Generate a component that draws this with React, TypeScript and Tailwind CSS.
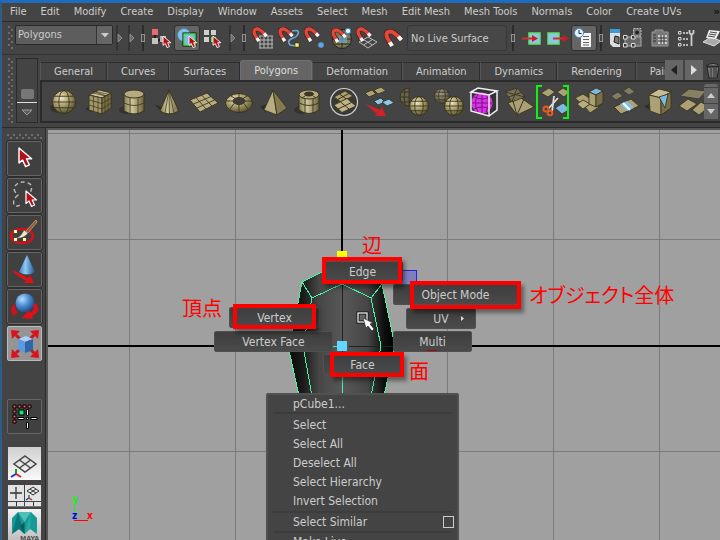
import React from "react";
import type { ReactNode } from "react";

const MENUS = [
  "File", "Edit", "Modify", "Create", "Display", "Window", "Assets",
  "Select", "Mesh", "Edit Mesh", "Mesh Tools", "Normals", "Color", "Create UVs",
];

const TABS = [
  "General", "Curves", "Surfaces", "Polygons", "Deformation",
  "Animation", "Dynamics", "Rendering", "PaintEffects",
];

/* ---------- shared drawing pieces ---------- */

function Defs() {
  return (
    <svg width="0" height="0" className="absolute" aria-hidden="true">
      <defs>
        <radialGradient id="goldBall" cx="38%" cy="32%" r="70%">
          <stop offset="0" stopColor="#f0e8c4" />
          <stop offset=".5" stopColor="#a89d6e" />
          <stop offset="1" stopColor="#5a5332" />
        </radialGradient>
        <linearGradient id="goldSide" x1="0" x2="1" y1="0" y2="0">
          <stop offset="0" stopColor="#8a8056" />
          <stop offset=".4" stopColor="#cfc59b" />
          <stop offset="1" stopColor="#6b623e" />
        </linearGradient>
        <radialGradient id="blueBall" cx="35%" cy="30%" r="75%">
          <stop offset="0" stopColor="#b5dcff" />
          <stop offset=".5" stopColor="#4a8bd0" />
          <stop offset="1" stopColor="#1c4478" />
        </radialGradient>
        <linearGradient id="blueCone" x1="0" x2="1" y1="0" y2="0">
          <stop offset="0" stopColor="#3d7fc0" />
          <stop offset=".4" stopColor="#8cc8f5" />
          <stop offset="1" stopColor="#215288" />
        </linearGradient>
        <linearGradient id="bodyAcross" x1="0" x2="1" y1="0" y2="0">
          <stop offset="0" stopColor="#080808" />
          <stop offset=".14" stopColor="#1c1c1c" />
          <stop offset=".28" stopColor="#464646" />
          <stop offset=".5" stopColor="#585858" />
          <stop offset=".74" stopColor="#464646" />
          <stop offset=".9" stopColor="#0e0e0e" />
          <stop offset="1" stopColor="#000" />
        </linearGradient>
      </defs>
    </svg>
  );
}

function Svg({ s = 30, h, children }: { s?: number; h?: number; children: ReactNode }) {
  const hh = h ?? s;
  return (
    <svg width={s} height={hh} viewBox={`0 0 ${s} ${hh}`} aria-hidden="true" className="block shrink-0">
      {children}
    </svg>
  );
}

function RedArrow({ x, y, k = 1 }: { x: number; y: number; k?: number }) {
  return (
    <path
      transform={`translate(${x} ${y}) scale(${k})`}
      d="M0 0V12.5L3 10L5.5 15.5L8.6 14L6.2 9H10.5Z"
      fill="#b80f16" stroke="#fff" strokeWidth="1.2" strokeLinejoin="round"
    />
  );
}

const EDGE = "#3a3419";

function Ball({ x, y, r }: { x: number; y: number; r: number }) {
  return (
    <g stroke={EDGE} fill="none">
      <circle cx={x} cy={y} r={r} fill="url(#goldBall)" />
      <ellipse cx={x} cy={y} rx={r * 0.45} ry={r} strokeWidth=".9" />
      <path d={`M${x - r} ${y}H${x + r}M${x - r * 0.85} ${y - r * 0.5}H${x + r * 0.85}M${x - r * 0.85} ${y + r * 0.5}H${x + r * 0.85}`} strokeWidth=".9" />
    </g>
  );
}

function Quad({ d, fill = "#aca175" }: { d: string; fill?: string }) {
  return <path d={d} fill={fill} stroke={EDGE} strokeWidth=".9" strokeLinejoin="round" />;
}

const SHELF: { name: string; art: ReactNode }[] = [
  { name: "Sphere", art: <><ellipse cx="10" cy="21" rx="9" ry="5" fill="#2c2c2c" opacity=".7" /><Ball x={15} y={15} r={11.5} /></> },
  { name: "Cube", art: <>
    <path d="M1 22L8 18V25Z" fill="#2c2c2c" />
    <Quad d="M5 8L15 3L27 6L18 11Z" fill="#cfc59b" />
    <Quad d="M5 8L18 11V27L5 23Z" fill="#a1966a" />
    <Quad d="M18 11L27 6V21L18 27Z" fill="#7a7049" />
    <path d="M5 13L18 16.5L27 11M5 18L18 22L27 16M9.500 9V24.500M14 10V26M21 9.300V25M24 7.600V23M9 6L22 9M12 4.500L24.500 7.500M9 4L22 9" stroke={EDGE} strokeWidth=".7" fill="none" />
  </> },
  { name: "Cylinder", art: <>
    <ellipse cx="7" cy="23" rx="7" ry="4" fill="#2c2c2c" opacity=".7" />
    <path d="M5 7V24Q15 30 25 24V7Z" fill="url(#goldSide)" stroke={EDGE} />
    <ellipse cx="15" cy="7" rx="10" ry="4" fill="#b5aa80" stroke={EDGE} />
    <path d="M5 16Q15 21 25 16M11 11V27M19 11V27" stroke={EDGE} fill="none" strokeWidth=".8" />
  </> },
  { name: "Cone", art: <>
    <path d="M0 17L12 22L9 26Z" fill="#2c2c2c" />
    <path d="M15 3L6 24Q15 30 25 24Z" fill="url(#goldSide)" stroke={EDGE} />
    <path d="M15 3L11 26M15 3L15.500 27M15 3L20 26" stroke={EDGE} strokeWidth=".7" />
  </> },
  { name: "Plane", art: <>
    <Quad d="M1 13L18 6L29 16L11 25Z" fill="#b8ad82" />
    <path d="M4.500 17L22 9.500M8 21L25.500 13M7 10.500L17 22M12.500 8L23 19" stroke={EDGE} strokeWidth=".9" />
  </> },
  { name: "Torus", art: <>
    <ellipse cx="15" cy="16" rx="13.500" ry="9.500" fill="url(#goldBall)" stroke={EDGE} />
    <ellipse cx="15" cy="14" rx="6" ry="3.500" fill="#3d3d3d" stroke={EDGE} />
    <path d="M15 17.500V25.500M20 16.500L24 22M10 16.500L6 22M21 14H28M9 14H2M19 11.500L23 9M11 11.500L7 9M15 10.500V6.500" stroke={EDGE} strokeWidth=".9" />
  </> },
  { name: "Pyramid", art: <>
    <path d="M1 20L8 17L7 25Z" fill="#2c2c2c" />
    <Quad d="M14 3L5 23L18 28Z" fill="#b8ad82" />
    <Quad d="M14 3L18 28L28 21Z" fill="#857b52" />
  </> },
  { name: "Pipe", art: <>
    <ellipse cx="7" cy="23" rx="7" ry="4" fill="#2c2c2c" opacity=".7" />
    <path d="M5 8V23Q15 30 25 23V8Z" fill="url(#goldSide)" stroke={EDGE} />
    <ellipse cx="15" cy="7.500" rx="10" ry="4.500" fill="#b5aa80" stroke={EDGE} />
    <ellipse cx="15" cy="7" rx="4.500" ry="2" fill="#3a3a2a" stroke={EDGE} />
    <path d="M5 16Q15 21 25 16M11 12V26M19 12V26M11 9L8 11M19 9L22 11" stroke={EDGE} fill="none" strokeWidth=".9" />
  </> },
  { name: "Subdivide", art: <>
    <circle cx="15" cy="15" r="13.500" fill="#3a3a3a" stroke="#cfcfcf" strokeWidth="1.200" />
    <Quad d="M5 10L16 4L24 9L12 15Z" />
    <path d="M10.500 7L18 12.500M8.500 12.500L20 6.500" stroke={EDGE} />
    <Quad d="M5 18L18 11.500L27 19L13 25.500Z" fill="#bfb489" />
    <path d="M9 22L22.500 15.500M11.500 15L20 22" stroke={EDGE} />
  </> },
  { name: "Extract", art: <>
    <Quad d="M1 6L8 3L12 7L5 10Z" /><Quad d="M10 3L17 0L22 4L14 7Z" />
    <Quad d="M10 14L17 11L21 15L14 18Z" fill="#8cc6ec" /><Quad d="M18 15L25 12L30 16L23 19Z" fill="#8cc6ec" />
    <path d="M2 17L16 23L18 20L22 29L11 29L13 27L7 22Z" fill="#d1202a" />
  </> },
  { name: "Combine", art: <><path d="M10 1A9 9 0 0 0 10 19Z" fill="#68634e" stroke={EDGE} /><path d="M1 10H10M3 5H10M3 15H10M6 2Q4 10 6 18" stroke={EDGE} fill="none" /><Ball x={20} y={19} r={9.5} /></> },
  { name: "Separate", art: <><g opacity=".55"><Ball x={8} y={9} r={7.5} /></g><Ball x={20} y={19} r={9.5} /></> },
  { name: "Smooth proxy", art: <>
    <path d="M2 5L9 1L28 4L28 23L20 29L2 24Z" fill="#333" />
    <circle cx="13" cy="16" r="10.500" fill="#d935e4" />
    <path d="M13 6V26M3 16H23M5 10Q13 14 21 10M5 22Q13 18 21 22M9 7Q4 16 9 25M17 7Q22 16 17 25" stroke="#7a1187" fill="none" />
    <path d="M2 5L9 1L28 4L20 8ZM2 5V24L20 29V8M20 29L28 23V4" fill="none" stroke="#f2eef5" strokeWidth="1.500" />
  </> },
  { name: "Append", art: <>
    <Quad d="M4 16L17 11L30 20L13 28Z" /><path d="M13 28L9 14M13 28L20 12" stroke={EDGE} />
    <g opacity=".75"><Quad d="M1 5L13 1L21 10L8 15Z" fill="#8b825c" /><path d="M4.500 10L17 5.500M1 5L21 10M13 1L8 15" stroke={EDGE} /></g>
  </> },
  { name: "Cut faces", art: <>
    <Quad d="M2 6L10 1L16 5L9 10Z" /><Quad d="M18 5L24 1L31 5L25 10Z" /><Quad d="M16 21L24 16L31 22L23 27Z" fill="#7cb9e2" />
    <path d="M9 22L19 11M13 25L15 9" stroke="#ddd" strokeWidth="1.800" />
    <circle cx="7" cy="22" r="2.500" fill="none" stroke="#e65a1c" strokeWidth="2" /><circle cx="11" cy="26" r="2.300" fill="none" stroke="#e65a1c" strokeWidth="2" />
  </> },
  { name: "Extrude", art: <>
    <Quad d="M1 11L9 7L20 14L11 20Z" /><Quad d="M11 20L19 15L25 20L16 26Z" /><Quad d="M3 17L9 13L16 17L9 22Z" fill="#b8ad82" />
    <Quad d="M15 5L22 1L29 4L22 8Z" fill="#7cb9e2" /><Quad d="M15 5L22 8V20L15 17Z" /><Quad d="M22 8L29 4V16L22 20Z" fill="#786e48" />
  </> },
  { name: "Bridge", art: <>
    <g opacity=".6"><Quad d="M2 9L9 5L14 9L7 13Z" /><Quad d="M14 4L20 0L26 5L20 8Z" /></g>
    <Quad d="M5 20L22 12L30 19L12 27Z" /><path d="M11 17L18 14L25 21L18 24Z" fill="#82bee8" /><path d="M14 16L21 23" stroke="#fff" strokeWidth="2" />
  </> },
  { name: "Bevel", art: <>
    <path d="M0 19L8 16V25Z" fill="#2c2c2c" />
    <Quad d="M5 8L15 2L27 5L17 11Z" fill="#c6bc92" /><Quad d="M5 8L17 11V28L6 24Z" /><Quad d="M17 11L27 5V21L17 28Z" fill="#786e48" /><Quad d="M15 10L24 7L21 21Z" fill="#7cb9e2" />
  </> },
  { name: "Merge", art: <>
    <g opacity=".65"><Quad d="M1 9L10 2L27 4L20 12Z" /></g><Quad d="M0 19L9 12L18 17L8 24Z" /><Quad d="M13 23L22 15L30 20L20 28Z" />
  </> },
];

function Magnet() {
  return (
    <g fill="none" strokeLinejoin="round">
      <path d="M6 13L2.800 7.500Q.5 2 5.500 2Q8 2 13.500 8" stroke="#5c1511" strokeWidth="4.600" />
      <path d="M6 13L2.800 7.500Q.5 2 5.500 2Q8 2 13.500 8" stroke="#dc4a3d" strokeWidth="3.300" />
      <path d="M4.800 11L6.800 14.200M12 6.300L14.500 9.200" stroke="#f5f5f5" strokeWidth="3.300" />
    </g>
  );
}

const MAGNETS: { name: string; art: ReactNode }[] = [
  { name: "Snap to grids", art: <><path d="M7 9H21M7 13H21M7 17H21M7 21H21M8 9V21M12 9V21M16 9V21M20 9V21" stroke="#b8b8b8" /><Magnet /></> },
  { name: "Snap to curves", art: <><path d="M14 4Q22 2 20 7Q19 10 13 12Q9 14 12 18L18 19" fill="none" stroke="#69a9d8" strokeWidth="1.600" /><Magnet /><rect x="17" y="16" width="4" height="4" fill="#fff45a" stroke="#222" strokeWidth=".5" /></> },
  { name: "Snap to points", art: <><Magnet /><circle cx="17" cy="18" r="2.800" fill="#5da4e8" /></> },
  { name: "Snap to projected center", art: <><circle cx="12" cy="12" r="9.500" fill="#7d7654" stroke="#24231b" /><path d="M3 12H21M12 3V21M5 17H19" stroke="#2c2a1e" /><rect x="9" y="9" width="8" height="7" fill="#68aac8" opacity=".75" /><g transform="translate(1 1)"><Magnet /></g><circle cx="18" cy="4" r="2.700" fill="#eef7ff" stroke="#2c86cf" /></> },
  { name: "Snap to view planes", art: <><path d="M3 15L12 10L21 15L12 21ZM7.500 12.500L16.500 18M7.500 18L16.500 12.500" fill="none" stroke="#bbb" /><Magnet /></> },
  { name: "Make live", art: <g transform="translate(2 2) scale(1.200)"><Magnet /></g> },
];

/* ---------- small chrome parts ---------- */

function Grip({ className }: { className: string }) {
  return (
    <div
      aria-hidden="true"
      className={`shrink-0 bg-[radial-gradient(circle_at_1px_1px,#6c6c6c_1px,transparent_1px),radial-gradient(circle_at_4px_4px,#6c6c6c_1px,transparent_1px)] bg-[size:6px_6px] ${className}`}
    />
  );
}

function Handle() {
  return (
    <span className="flex w-3 shrink-0 justify-center" aria-hidden="true">
      <Svg s={8} h={26}><path d="M2 0V26" stroke="#242424" /><path d="M3 9L7 13L3 17Z" fill="#6b6b6b" stroke="#999" strokeWidth=".8" /></Svg>
    </span>
  );
}

function Divider({ className = "w-3" }: { className?: string }) {
  return (
    <span className={`flex shrink-0 justify-center ${className}`} aria-hidden="true">
      <Svg s={6} h={26}><path d="M3 0V26" stroke="#242424" strokeWidth="1.500" /><rect x="1.500" y="9.500" width="3" height="7" fill="#444" stroke="#919191" /></Svg>
    </span>
  );
}

function Tool({ name, on = false, children }: { name: string; on?: boolean; children: ReactNode }) {
  return (
    <button
      aria-label={name}
      className={`flex h-[26px] w-[26px] shrink-0 items-center justify-center rounded-[3px] border ${on ? "border-[#303030] bg-[#656565]" : "border-transparent"}`}
    >
      {children}
    </button>
  );
}

function ToolBar() {
  return (
    <div className="flex h-[33px] shrink-0 items-center overflow-hidden border-b border-[#333] pl-[6px]">
      <Grip className="mr-px h-6 w-[6px]" />
      <label className="relative mb-[6px] block w-[98px] shrink-0">
        <span className="sr-only">Menu set</span>
        <select className="block h-5 w-full appearance-none rounded-[2px] border border-[#292929] bg-[#5d5d5d] py-0 pl-[2px] text-[#ccc]">
          <option>Polygons</option>
        </select>
        <span className="pointer-events-none absolute inset-y-px right-px flex w-4 items-center justify-center border-l border-[#333] bg-[#666]">
          <Svg s={8} h={5}><path d="M0 0H8L4 4.500Z" fill="#ccc" /></Svg>
        </span>
      </label>
      <Handle /><Handle /><Divider className="w-[11px]" />
      <Tool name="Select by hierarchy"><Svg s={22}>
        <path d="M5 7V16M8 13H14" stroke="#111" strokeWidth="1.500" />
        <rect x="2" y="2" width="6" height="6" fill="#ea6a6e" /><rect x="2" y="11" width="6" height="6" fill="#c4c4c4" /><rect x="10" y="9" width="6" height="6" fill="#b4b4b4" />
        <RedArrow x={13} y={9} k={0.75} /></Svg></Tool>
      <Tool name="Select by object" on><Svg s={22}>
        <circle cx="8" cy="8" r="6.500" fill="#82c0ee" stroke="#3f78a8" strokeWidth=".6" /><rect x="8" y="7" width="11" height="11" fill="#7dbbe6" stroke="#111" strokeWidth="3" /><rect x="8" y="7" width="11" height="11" fill="#7dbbe6" stroke="#45e045" strokeWidth="1.500" />
        <RedArrow x={13} y={9} k={0.75} /></Svg></Tool>
      <Tool name="Select by component"><Svg s={22}>
        <path d="M2 3H7V8H2ZM9 3H14V8H9ZM2 10H7V15H2Z" fill="#cfcfcf" /><path d="M9 10H14V15H9Z" fill="#5fe05f" />
        <RedArrow x={11} y={9} k={0.75} /></Svg></Tool>
      <Handle /><Divider />
      {MAGNETS.map((m) => <Tool key={m.name} name={m.name}><Svg s={22}>{m.art}</Svg></Tool>)}
      <input
        aria-label="Live surface" readOnly value="No Live Surface"
        className="ml-px h-[26px] w-[100px] shrink-0 rounded-[3px] border border-[#373737] bg-[#474747] pl-[3px] text-[#ccc]"
      />
      <Divider />
      <Tool name="Input connections"><Svg s={22}><rect x="8" y="6" width="11" height="11" fill="#8cc6ea" stroke="#62e062" strokeWidth="1.500" /><path d="M1 11.500H12" stroke="#d02c2c" strokeWidth="2" /><path d="M11 8L17 11.500L11 15Z" fill="#c91c22" /></Svg></Tool>
      <Tool name="Output connections"><Svg s={22}><rect x="1" y="6" width="11" height="11" fill="#8cc6ea" stroke="#62e062" strokeWidth="1.500" /><path d="M6 11.500H17" stroke="#d02c2c" strokeWidth="2" /><path d="M16 8L22 11.500L16 15Z" fill="#c91c22" /></Svg></Tool>
      <Tool name="Construction history" on><Svg s={22}><path d="M8 6H18V20H8Z" fill="#f5f5f5" /><path d="M10 9.500H16M10 12.500H16M10 15.500H16M10 18H16" stroke="#666" /><circle cx="6" cy="6" r="4.500" fill="#e6f4ff" stroke="#4e8cc0" /><path d="M6 3V6.500H8.500" stroke="#222" fill="none" /></Svg></Tool>
      <Divider className="w-2" />
      <button aria-label="Render settings" className="flex w-[42px] shrink-0 items-center justify-center">
        <Svg s={34} h={20}>
          <path d="M1 1H11V19H4L1 16Z" fill="#ddd" /><path d="M1 1H11V5H1Z" fill="#3b9ad8" /><path d="M10 9L6 8L5 14L10 16Z" fill="#777" stroke="#222" />
          <rect x="16" y="9" width="16" height="9" fill="#686868" stroke="#aaa" /><path d="M14.500 7.500H18V11H14.500ZM22.500 7.500H26V11H22.500ZM14.500 15.500H18V19H14.500ZM22.500 15.500H26V19H22.500Z" fill="#333" stroke="#ddd" />
          <path d="M24.500 .5H32V8H24.500Z" fill="#777" stroke="#bbb" strokeDasharray="2 1" /><circle cx="28" cy="4.500" r="2" fill="#222" />
        </Svg>
      </button>
      <Tool name="Spreadsheet"><Svg s={20}><path d="M2 4H5V2H13V4H18V18H2Z" fill="#777" stroke="#999" /><path d="M8 7H17V16H8Z" fill="#ccc" /><path d="M8 10H17M8 13H17M11 7V16M14 7V16M3 7H6M3 10H6M3 13H6" stroke="#333" /></Svg></Tool>
      <Tool name="Attribute list"><Svg s={20}><path d="M2.500 3.500H5V6H2.500ZM2.500 9.500H5V12H2.500ZM2.500 15.500H5V18H2.500Z" stroke="#ddd" fill="none" /><path d="M7 5H12M7 11H12M7 17H12" stroke="#ddd" strokeWidth="1.500" strokeDasharray="2 1" /><path d="M13.500 2V5L15.500 7L17.500 5V2M15.500 7V18" stroke="#ccc" strokeWidth="1.800" fill="none" /></Svg></Tool>
      <Tool name="Channel box"><Svg s={20}><path d="M1 14L9 9L19 13L12 18Z" fill="#aaa" stroke="#ddd" /><path d="M7 2L18 3L14 11L4 10Z" fill="#eee" /><path d="M8 4L15 5M7 6L14 7M6 8L13 9" stroke="#444" /></Svg></Tool>
    </div>
  );
}

function Shelf() {
  return (
    <div className="flex h-[73px] shrink-0 overflow-hidden border-b border-[#2b2b2b] pt-[3px] pb-1 pl-[6px]">
      <Grip className="mr-[2px] h-full w-[6px]" />
      <div className="mr-[2px] flex w-[22px] shrink-0 flex-col items-center justify-end border border-[#2b2b2b]">
        <button aria-label="Shelf tab options" className="mb-[3px] h-[10px] w-[13px] rounded-[2px] bg-[#777]" />
        <span className="h-px w-full bg-[#ddd]" />
        <button aria-label="Shelf menu" className="flex h-[19px] items-center"><Svg s={12} h={7}><path d="M1 1H11L6 6Z" fill="#5d5d5d" stroke="#999" /></Svg></button>
      </div>
      <div className="flex min-w-0 flex-1 flex-col">
        <div className="flex h-[22px] shrink-0 items-end">
          <div role="tablist" aria-label="Shelves" className="flex min-w-0 flex-1 items-end overflow-hidden">
            {TABS.map((t) => (
              <button
                key={t} role="tab" aria-selected={t === "Polygons"}
                className={`shrink-0 border border-b-0 px-[13px] ${t === "Polygons" ? "h-5 rounded-t-[3px] border-[#707070] bg-[#656565] text-[#ddd]" : "h-[18px] border-[#2d2d2d] border-l-[#565656] bg-[#454545] text-[#ccc]"}`}
              >
                {t}
              </button>
            ))}
          </div>
          <div className="flex shrink-0 items-center gap-[2px] pr-[1px]">
            <button aria-label="Scroll tabs left" className="flex h-5 w-[18px] items-center justify-center bg-[#666]"><Svg s={8} h={12}><path d="M7 1V11L1 6Z" fill="#222" /></Svg></button>
            <button aria-label="Scroll tabs right" className="flex h-5 w-[18px] items-center justify-center bg-[#666]"><Svg s={8} h={12}><path d="M1 1V11L7 6Z" fill="#ddd" /></Svg></button>
            <button aria-label="Delete shelf item" className="flex w-[14px] justify-center"><Svg s={14} h={18}><path d="M2 6H14L12 17H4Z" fill="#777" stroke="#222" /><path d="M6 7V16M9 7V16M11 7V16" stroke="#333" /><path d="M1 5Q8 0 15 5Z" fill="#888" stroke="#222" /></Svg></button>
          </div>
        </div>
        <div className="flex min-h-0 flex-1 items-center border-2 border-r-0 border-[#2b2b2b] bg-[#444] pl-1">
          <div className="flex min-w-0 flex-1 overflow-hidden">
            {SHELF.map((s) => (
              <button
                key={s.name} aria-label={s.name}
                className="relative flex h-9 w-[35px] shrink-0 items-center justify-center"
              >
                {s.name === "Cut faces" && (
                  <svg width="35" height="36" className="absolute inset-0" aria-hidden="true"><path d="M6 2H1V34H6M27 2H32V34H27" fill="none" stroke="#12f212" strokeWidth="2" /></svg>
                )}
                <Svg s={30}>{s.art}</Svg>
              </button>
            ))}
          </div>
          <div className="flex w-4 shrink-0 flex-col gap-px">
            <span className="h-[3px] w-[14px] rounded-t bg-[#686868]" />
            <button aria-label="Scroll shelf up" className="flex h-[15px] w-[14px] items-center justify-center bg-[#666]"><Svg s={8} h={5}><path d="M0 5H8L4 0Z" fill="#ccc" /></Svg></button>
            <button aria-label="Scroll shelf down" className="flex h-[15px] w-[14px] items-center justify-center bg-[#666]"><Svg s={8} h={5}><path d="M0 0H8L4 5Z" fill="#ccc" /></Svg></button>
          </div>
        </div>
      </div>
    </div>
  );
}

/* ---------- tool box ---------- */

const TOOLS: { name: string; art: ReactNode }[] = [
  { name: "Select tool", art: <RedArrow x={11} y={6} k={1.2} /> },
  { name: "Lasso tool", art: <><path d="M7 7Q12 1 20 4Q26 6 22 14M6 10Q7 14 10 16Q4 21 6 26Q10 29 14 24" fill="none" stroke="#b8b8b8" strokeWidth="1.500" strokeDasharray="4 3" /><RedArrow x={18} y={12} k={1} /></> },
  { name: "Paint selection tool", art: <>
    <ellipse cx="14" cy="20" rx="11" ry="7" fill="none" stroke="#d60f1a" strokeWidth="2.500" />
    <path d="M18 15L28 4L29 6L20 17Z" fill="#8c5a3a" stroke="#c29068" strokeWidth="1" /><path d="M8 22Q13 21 16 14L20 17Q16 23 8 22Z" fill="#efe6c8" stroke="#444" strokeWidth=".5" />
    <path d="M6 14H9V17H6ZM6 22H9V25H6ZM15 22H18V25H15Z" fill="#ffffa8" />
  </> },
  { name: "Move tool", art: <><path d="M19 2L11 19Q19 24 27 19Z" fill="url(#blueCone)" /><path d="M5 17L20 25L22 22L26 30L15 30L18 28L6 20Z" fill="#e01018" /></> },
  { name: "Rotate tool", art: <><path d="M6 14Q0 20 6 26L10 22Q6 19 8 16Z" fill="#c8141c" /><circle cx="17" cy="13" r="9.500" fill="url(#blueBall)" /><path d="M28 13Q34 22 24 26L25 29L14 28L21 20L22 23Q27 20 25 15Z" fill="#e01018" /></> },
  { name: "Scale tool", art: <>
    <path d="M8 8L26 26M26 8L8 26" stroke="#c01820" strokeWidth="3" />
    <path d="M3 3L12 4L4 12ZM31 3L22 4L30 12ZM3 31L12 30L4 22ZM31 31L22 30L30 22Z" fill="#e01018" />
    <path d="M10 12L18 9L25 12L17 15Z" fill="#a8d2f7" /><path d="M10 12L17 15V26L10 23Z" fill="#5a9ade" /><path d="M17 15L25 12V23L17 26Z" fill="#2f66a8" />
  </> },
];

const PERSP = "M16 8L27 16L16 24L5 16ZM10.500 12L21.500 20M21.500 12L10.500 20";

function ToolBox() {
  return (
    <div className="flex w-[44px] shrink-0 flex-col overflow-hidden border-r border-[#2b2b2b] pl-[5px] pt-[6px]">
      <Grip className="mb-px h-[6px] w-[35px]" />
      <div className="flex flex-col gap-[2px]">
        {TOOLS.map((t) => (
          <button key={t.name} aria-label={t.name} className={`flex h-[35px] w-[35px] shrink-0 items-center justify-center rounded-[2px] border ${t.name === "Scale tool" ? "border-[#bbb] bg-[#959595]" : "border-[#656565] bg-[#404040] outline outline-[#2e2e2e]"}`}>
            <Svg s={33}>{t.art}</Svg>
          </button>
        ))}
      </div>
      <button aria-label="Last tool" className="mt-[38px] flex h-[35px] w-[35px] shrink-0 items-center justify-center rounded-[2px] border border-[#656565] bg-[#404040]">
        <Svg s={33}>
          <path d="M5 5H8V8H5ZM10 5H13V8H10ZM15 5H18V8H15ZM20 5H23V8H20ZM5 10H8V13H5ZM5 15H8V18H5ZM5 20H8V23H5Z" fill="#f05a55" stroke="#000" />
          <path d="M11 10H16V15H11Z" fill="#19e37c" stroke="#000" />
          <path d="M18.500 9.500H20.500V15.500H18.500ZM10 17.500H16V19.500H10ZM18.500 17.500H20.500V19.500H18.500ZM23 17.500H29V19.500H23ZM18.500 22.500H20.500V28.500H18.500Z" fill="#fff" stroke="#000" />
        </Svg>
      </button>
      <button aria-label="Single perspective view" className="mt-[13px] ml-px flex h-[33px] w-[33px] shrink-0 items-center justify-center bg-gradient-to-b from-[#d0d0d0] to-[#fafafa]">
        <Svg s={32}><path d={PERSP} fill="none" stroke="#444" strokeWidth="1.500" /><path d="M7 21V26" stroke="#169c30" strokeWidth="2" /><path d="M7 26L2 29" stroke="#1733d8" strokeWidth="2" /><path d="M7 26L12 29" stroke="#e02020" strokeWidth="2" /></Svg>
      </button>
      <div className="mt-[5px] ml-px grid h-[22px] w-[33px] shrink-0 grid-cols-2 grid-rows-[16px_4px] gap-px overflow-hidden border-b border-[#777] text-[#222]">
        <button aria-label="Four view" className="flex items-center justify-center bg-[#e3e3e3]"><Svg s={14}><path d="M7 1V13M1 7H13" stroke="#333" strokeWidth="1.300" /></Svg></button>
        <button aria-label="Perspective and outliner" className="flex items-center justify-center bg-[#e3e3e3]"><Svg s={16}><path d="M8 2L14 6L8 10L2 6ZM5 4L11 8M11 4L5 8" fill="none" stroke="#333" /><path d="M4 10V13" stroke="#169c30" strokeWidth="1.500" /><path d="M4 13L1 15" stroke="#1733d8" strokeWidth="1.500" /><path d="M4 13L7 15" stroke="#e02020" strokeWidth="1.500" /></Svg></button>
        <span className="flex justify-center bg-[#e3e3e3]"><span className="h-full w-px bg-[#333]" /></span>
        <span className="flex justify-center bg-[#e3e3e3]"><span className="h-full w-px bg-[#333]" /></span>
      </div>
      <div className="mt-[2px] ml-px h-[33px] w-[33px] shrink-0 bg-gradient-to-b from-[#f3f3f3] to-[#bcbcbc]">
        <svg width="33" height="33" aria-label="Maya">
          <path d="M4 25V9L10 3L16.500 8L23 3L29 9V25L22 20L16.500 25L11 20Z" fill="#159a98" />
          <path d="M10 3L16.500 25L11 20L4 25Z" fill="#0c7778" /><path d="M10 3H23L16.500 13Z" fill="#4fbfb8" /><path d="M23 3L22 20L16.500 25Z" fill="#2aa8a2" /><path d="M16.500 13V25L12 17Z" fill="#075c62" />
          <text x="12" y="32" fontSize="7" fontWeight="bold" fill="#555">MAYA</text>
        </svg>
      </div>
    </div>
  );
}

/* ---------- viewport ---------- */

function Scene() {
  const xs = [129, 235, 447, 553, 659, 765, 871, 977, 1083, 1189];
  const ys = [133, 239, 451, 557, 663, 769, 875];
  return (
    <svg className="absolute inset-0 h-full w-full" aria-hidden="true">
      <g transform="translate(-48 -130)">
        <g stroke="#7b7b7b" shapeRendering="crispEdges">
          {xs.map((x) => <path key={x} d={`M${x + 0.5} 130V2000`} />)}
          {ys.map((y) => <path key={y} d={`M48 ${y + 0.5}H3000`} />)}
        </g>
        <g stroke="#000" strokeWidth="2" shapeRendering="crispEdges"><path d="M342 130V400M48 346H3000" /></g>
        <path d="M302 282L322 272L342 262L364 272L382 284L395 346L384 396H299L289 350Z" fill="url(#bodyAcross)" />
        <g fill="none" shapeRendering="crispEdges">
          <path d="M342 284V376M349 346H395" stroke="#202020" />
          <path d="M302 282L322 272L342 262L364 272L382 284L395 346L384 396M302 282L289 350L299 396M302 282L312 298L342 284L371 298L382 284M312 298L303 346L312 396M371 298L381 346L371 396M342 376V396M333 346H338" stroke="#45f5a3" />
        </g>
        <rect x="337" y="251" width="10" height="9" fill="#ff0" />
        <rect x="337" y="341" width="10" height="10" fill="#62d7ff" />
        <rect x="401.500" y="270.500" width="15" height="15" fill="#4040ff" fillOpacity=".35" stroke="#2424d8" />
        <path d="M74.500 521V507" stroke="#0f0" /><path d="M74 520.500H88" stroke="#f00" />
        <g fontSize="10" fontWeight="bold"><text x="72" y="503" fill="#0f0">y</text><text x="72" y="519" fill="#00f">z</text><text x="87" y="519" fill="#f00">x</text></g>
      </g>
    </svg>
  );
}

const MARKS = [
  { text: "Edge", box: "left-[274px] top-[131px] w-[81px]" },
  { text: "Object Mode", box: "left-[345px] top-[154px] w-[125px]" },
  { text: "UV", box: "left-[358px] top-[178px] w-[70px]" },
  { text: "Multi", box: "left-[345px] top-[201px] w-[79px]" },
  { text: "Vertex", box: "left-[181px] top-[177px] w-[91px]" },
  { text: "Vertex Face", box: "left-[166px] top-[201px] w-[119px]" },
  { text: "Face", box: "left-[275px] top-[224px] w-[79px]" },
];

const FRAMES = [
  "left-[274px] top-[127px] h-[27px] w-[80px]",
  "left-[362px] top-[151px] h-[28px] w-[111px]",
  "left-[185px] top-[174px] h-[25px] w-[83px]",
  "left-[282px] top-[222px] h-[25px] w-[74px]",
];

const NOTES = [
  { text: "辺", box: "left-[314px] top-[105px]" },
  { text: "オブジェクト全体", box: "left-[481px] top-[155px]" },
  { text: "頂点", box: "left-[134px] top-[168px]" },
  { text: "面", box: "left-[361px] top-[231px]" },
];

const MENU_ITEMS = ["Select", "Select All", "Deselect All", "Select Hierarchy", "Invert Selection"];

function Rule() {
  return <div role="separator" className="mx-[5px] h-[2px] bg-[#3c3c3c]" />;
}

function Viewport() {
  return (
    <main className="relative min-w-0 flex-1 overflow-hidden bg-[#a0a0a0] text-[12px]">
      <Scene />
      {MARKS.map((m) => (
        <button key={m.text} className={`absolute flex h-[21px] items-center justify-center rounded-[2px] border border-[#505050] bg-gradient-to-b from-[#3e3e3e] to-[#4a4a4a] text-[#ccc] ${m.box}`}>
          {m.text}
          {m.text === "UV" && <span className="absolute right-[10px] top-[6px]"><Svg s={5} h={7}><path d="M1 1V6L4 3.500Z" fill="#ddd" /></Svg></span>}
        </button>
      ))}
      {FRAMES.map((f) => (
        <div key={f} className={`pointer-events-none absolute border-4 border-[#f00] shadow-[3px_4px_4px_rgba(0,0,0,0.4)] ${f}`} />
      ))}
      {NOTES.map((n) => (
        <p key={n.text} className={`absolute whitespace-nowrap font-['Noto_Sans_CJK_JP',sans-serif] text-[20px] leading-[20px] text-[#f00] [font-feature-settings:'palt'] ${n.box}`}>{n.text}</p>
      ))}
      <span className="absolute left-[379px] top-[220px] h-px w-[10px] bg-[#a00]" />
      <svg width="20" height="26" className="absolute left-[308px] top-[181px]" aria-hidden="true">
        <rect x="2" y="2" width="9" height="9" fill="#777" fillOpacity=".6" stroke="#111" strokeWidth="3" /><rect x="2" y="2" width="9" height="9" fill="none" stroke="#fff" strokeWidth="1.200" />
        <path d="M7 7L10 17L12 15L16 20L18 18L14 13L17 12Z" fill="#fff" stroke="#222" strokeWidth=".6" />
      </svg>
      <div className="absolute left-[218px] top-[263px] w-[193px] rounded-[2px] border-2 border-[#515151] bg-[#444] text-[#ccc]">
        <button className="block h-[17px] pl-[25px] leading-[18px]">pCube1...</button>
        <Rule />
        <div className="flex flex-col items-start pt-[2px]">
          {MENU_ITEMS.map((i) => <button key={i} className="block h-[19px] pl-[25px] leading-[19px]">{i}</button>)}
        </div>
        <Rule />
        <div className="flex h-[18px] items-center justify-between pr-[3px]">
          <button className="pl-[25px]">Select Similar</button>
          <button aria-label="Select Similar options" className="h-3 w-[11px] border border-[#ccc]" />
        </div>
        <Rule />
        <button className="block h-[19px] pl-[25px] leading-[19px]">Make Live</button>
      </div>
    </main>
  );
}

export default function App() {
  return (
    <div className="flex h-screen flex-col overflow-hidden border-t-[3px] border-l-2 border-t-[#1d6cc0] border-l-[#2d5c85] bg-[#444] font-['DejaVu_Sans_Condensed','DejaVu_Sans',sans-serif] text-[11px] leading-[16px] text-[#ccc]">
      <Defs />
      <nav aria-label="Main menu" className="flex h-[19px] shrink-0 items-center gap-[14px] overflow-hidden border-b border-[#2b2b2b] pl-2 whitespace-nowrap">
        {MENUS.map((m) => <button key={m} className="shrink-0">{m}</button>)}
        <button aria-label="More menus" className="ml-auto shrink-0 font-bold text-[#111]">»</button>
      </nav>
      <ToolBar />
      <Shelf />
      <div className="flex min-h-0 flex-1">
        <ToolBox />
        <div className="flex min-w-0 flex-1 border-t-2 border-l-2 border-[#555]">
          <Viewport />
        </div>
      </div>
    </div>
  );
}
